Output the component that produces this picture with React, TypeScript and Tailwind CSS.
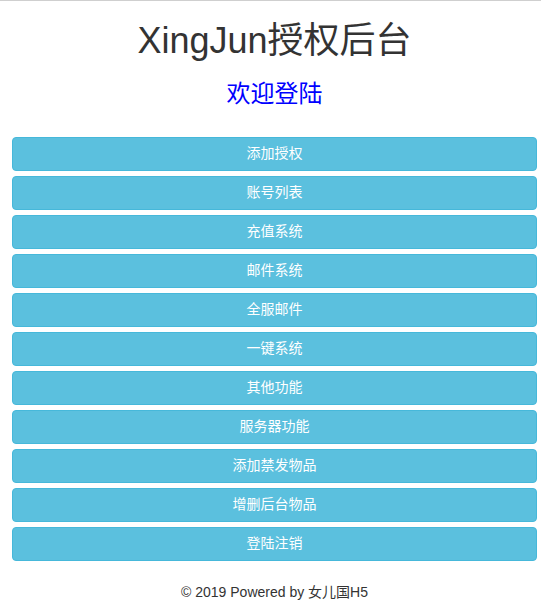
import React from 'react';

const menuItems: string[] = [
    '添加授权',
    '账号列表',
    '充值系统',
    '邮件系统',
    '全服邮件',
    '一键系统',
    '其他功能',
    '服务器功能',
    '添加禁发物品',
    '增删后台物品',
    '登陆注销',
];

const App: React.FC = () => {
    return (
        <div className="min-h-[608px] border-t border-[#cfcfcf] bg-white font-['Liberation_Sans','Noto_Sans_CJK_SC',sans-serif] text-[#333]">
            <div className="ml-3 mr-[4px] flex flex-col">
                {/* Header */}
                <h1 className="mt-5 mb-[10px] text-center text-[36px] leading-[1.1] font-normal">XingJun授权后台</h1>
                <h3 className="mt-[10px] text-center text-[24px] leading-[1.1] font-normal text-[#0000ff]">欢迎登陆</h3>

                {/* Menu buttons */}
                <div className="mt-[30px] flex flex-col gap-[5px]">
                    {menuItems.map((label) => (
                        <button
                            key={label}
                            type="button"
                            className="h-[34px] w-full rounded-[4px] border border-[#46b8da] bg-[#5bc0de] text-center text-[14px] text-white"
                        >
                            {label}
                        </button>
                    ))}
                </div>

                {/* Footer */}
                <p className="mt-[21px] text-center text-[14px] leading-[20px]">© 2019 Powered by 女儿国H5</p>
            </div>
        </div>
    );
};

export default App;
